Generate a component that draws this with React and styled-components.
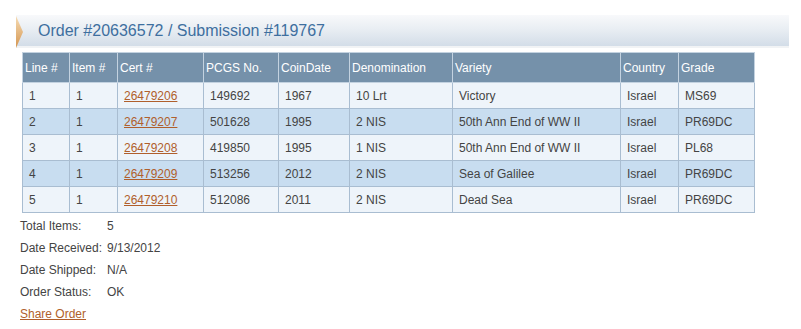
import React from "react";
import styled, { createGlobalStyle } from "styled-components";

const GlobalStyle = createGlobalStyle`
  body {
    margin: 0;
    background: #ffffff;
    font-family: "Liberation Sans", Arial, sans-serif;
  }
`;

const Page = styled.div`
  padding: 15px 0 0 16px;
  width: 801px;
  box-sizing: border-box;
`;

const TitleBar = styled.div`
  display: flex;
  align-items: center;
  width: 773px;
  height: 31px;
  background: linear-gradient(to bottom, #f8f9fb 0%, #e9eef3 45%, #d3dde8 100%);
  border-bottom: 2px solid #f1f3f5;
`;

const Chevron = styled.svg`
  flex: none;
  display: block;
  margin-top: 2px;
`;

const Title = styled.h1`
  margin: 0 0 0 15px;
  font-size: 16px;
  font-weight: normal;
  color: #3e6f9f;
`;

const Table = styled.table`
  margin: 4px 0 0 6px;
  border-collapse: collapse;
  table-layout: fixed;
  width: 733px;
  font-size: 12px;
  border: 1px solid #a9bdd1;
`;

const Th = styled.th`
  background: #7591aa;
  color: #ffffff;
  font-weight: normal;
  text-align: left;
  height: 29px;
  padding: 0 0 0 2px;
  border: 1px solid #c3d2e0;
`;

const Td = styled.td`
  height: 25px;
  padding: 0 0 0 6px;
  color: #444444;
  border: 1px solid #a9bdd1;
`;

const Row = styled.tr`
  background: ${({ $alt }) => ($alt ? "#c8ddf0" : "#eef4fa")};
`;

const Link = styled.a`
  color: #b05f2c;
  text-decoration: underline;
`;

const Info = styled.div`
  display: grid;
  grid-template-columns: 87px auto;
  grid-auto-rows: 22px;
  align-items: center;
  margin: 2px 0 0 4px;
  font-size: 12px;
  color: #444444;
`;

const Share = styled(Link)`
  grid-column: 1 / 3;
`;

const columns = [
  ["Line #", 47],
  ["Item #", 48],
  ["Cert #", 86],
  ["PCGS No.", 75],
  ["CoinDate", 71],
  ["Denomination", 103],
  ["Variety", 168],
  ["Country", 58],
  ["Grade", 76],
];

const rows = [
  ["1", "1", "26479206", "149692", "1967", "10 Lrt", "Victory", "Israel", "MS69"],
  ["2", "1", "26479207", "501628", "1995", "2 NIS", "50th Ann End of WW II", "Israel", "PR69DC"],
  ["3", "1", "26479208", "419850", "1995", "1 NIS", "50th Ann End of WW II", "Israel", "PL68"],
  ["4", "1", "26479209", "513256", "2012", "2 NIS", "Sea of Galilee", "Israel", "PR69DC"],
  ["5", "1", "26479210", "512086", "2011", "2 NIS", "Dead Sea", "Israel", "PR69DC"],
];

const details = [
  ["Total Items:", "5"],
  ["Date Received:", "9/13/2012"],
  ["Date Shipped:", "N/A"],
  ["Order Status:", "OK"],
];

export default function App() {
  return (
    <Page>
      <GlobalStyle />
      <TitleBar>
        <Chevron width="7" height="32" viewBox="0 0 7 32">
          <defs>
            <linearGradient id="chev" x1="0" y1="0" x2="0" y2="1">
              <stop offset="0" stopColor="#f6dcb4" />
              <stop offset="1" stopColor="#d49550" />
            </linearGradient>
          </defs>
          <polygon points="0,0 7,16 0,32" fill="url(#chev)" />
        </Chevron>
        <Title>Order #20636572 / Submission #119767</Title>
      </TitleBar>
      <Table>
        <colgroup>
          {columns.map(([name, w]) => (
            <col key={name} style={{ width: w }} />
          ))}
        </colgroup>
        <thead>
          <tr>
            {columns.map(([name]) => (
              <Th key={name}>{name}</Th>
            ))}
          </tr>
        </thead>
        <tbody>
          {rows.map((r, i) => (
            <Row key={r[2]} $alt={i % 2 === 1}>
              {r.map((v, j) => (
                <Td key={j}>{j === 2 ? <Link href="#">{v}</Link> : v}</Td>
              ))}
            </Row>
          ))}
        </tbody>
      </Table>
      <Info>
        {details.map(([label, value]) => (
          <React.Fragment key={label}>
            <span>{label}</span>
            <span>{value}</span>
          </React.Fragment>
        ))}
        <Share href="#">Share Order</Share>
      </Info>
    </Page>
  );
}
